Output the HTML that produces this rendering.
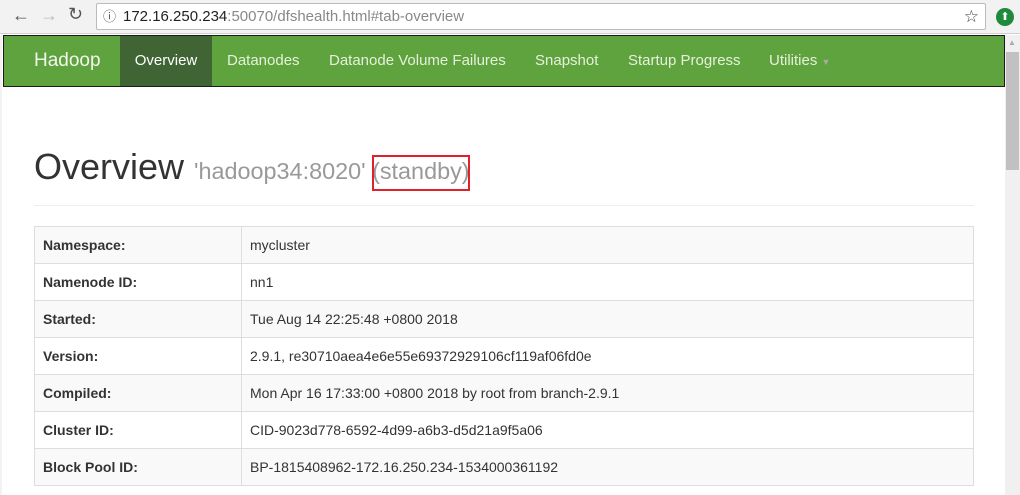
<!DOCTYPE html>
<html><head><style>
*{margin:0;padding:0;box-sizing:border-box}
body{width:1020px;height:495px;overflow:hidden;background:#fff;font-family:"Liberation Sans",sans-serif;position:relative}
.chrome{position:absolute;left:0;top:0;width:1020px;height:34px;background:#f2f2f2;border-bottom:1px solid #d0d0d0}
.url{position:absolute;left:96px;top:3px;width:890px;height:27px;background:#fff;border:1px solid #bbb;border-radius:2px;font-size:15px;line-height:25px;padding-left:26px;color:#888}
.url b{font-weight:normal;color:#222}
.nav{position:absolute;left:3px;top:35px;width:1002px;height:52px;background:#5fa33e;border:1px solid #1a1a1a}
.nav span{position:absolute;top:0;height:50px;line-height:50px;font-size:15px;color:#e6f0dc}
.left{position:absolute;left:0;top:35px;width:2px;height:460px;background:#f2f2f2}
.sb{position:absolute;left:1005px;top:35px;width:15px;height:460px;background:#f0f0f0}
h1{position:absolute;left:34px;top:146px;font-weight:normal;font-size:36px;color:#333;white-space:nowrap}
h1 small{font-size:23.4px;color:#999}
table{position:absolute;left:34px;top:226px;width:940px;border-collapse:collapse;font-size:14px;color:#333}
td{height:37px;border:1px solid #ddd;padding:0 8px}
td:first-child{width:207px;font-weight:bold}
tr:nth-child(odd){background:#f9f9f9}
</style></head><body>
<div class="chrome">
<span style="position:absolute;left:12px;top:5px;font-size:18px;color:#555">←</span>
<span style="position:absolute;left:40px;top:5px;font-size:18px;color:#bbb">→</span>
<span style="position:absolute;left:68px;top:4px;font-size:18px;color:#555">↻</span>
<div class="url"><span style="position:absolute;left:6px;top:0;color:#555;font-size:13px">ⓘ</span><b>172.16.250.234</b>:50070/dfshealth.html#tab-overview<span style="position:absolute;right:6px;top:0;color:#444;font-size:17px">☆</span></div>
<div style="position:absolute;left:996px;top:8px;width:18px;height:18px;border-radius:50%;background:#1e8a3c;color:#fff;font-size:11px;text-align:center;line-height:18px">⬆</div>
</div>
<div class="left"></div>
<div class="nav">
<span style="left:30px;font-size:19px;color:#f2f7ee">Hadoop</span>
<span style="left:116px;width:92px;background:#416434;text-align:center;color:#fff">Overview</span>
<span style="left:223px">Datanodes</span>
<span style="left:325px">Datanode Volume Failures</span>
<span style="left:531px">Snapshot</span>
<span style="left:624px">Startup Progress</span>
<span style="left:765px">Utilities <span style="position:static;font-size:9px;color:#aaa">▼</span></span>
</div>
<div class="sb"><div style="position:absolute;left:1px;top:17px;width:13px;height:118px;background:#c1c1c1"></div><span style="position:absolute;left:3px;top:3px;font-size:8px;color:#aaa">▲</span></div>
<h1>Overview <small>'hadoop34:8020' (standby)</small></h1>
<div style="position:absolute;left:372px;top:155px;width:98px;height:36px;border:2px solid #e0202a"></div>
<div style="position:absolute;left:34px;top:205px;width:940px;height:1px;background:#eee"></div>
<table>
<tr><td>Namespace:</td><td>mycluster</td></tr>
<tr><td>Namenode ID:</td><td>nn1</td></tr>
<tr><td>Started:</td><td>Tue Aug 14 22:25:48 +0800 2018</td></tr>
<tr><td>Version:</td><td>2.9.1, re30710aea4e6e55e69372929106cf119af06fd0e</td></tr>
<tr><td>Compiled:</td><td>Mon Apr 16 17:33:00 +0800 2018 by root from branch-2.9.1</td></tr>
<tr><td>Cluster ID:</td><td>CID-9023d778-6592-4d99-a6b3-d5d21a9f5a06</td></tr>
<tr><td>Block Pool ID:</td><td>BP-1815408962-172.16.250.234-1534000361192</td></tr>
</table>
</body></html>
